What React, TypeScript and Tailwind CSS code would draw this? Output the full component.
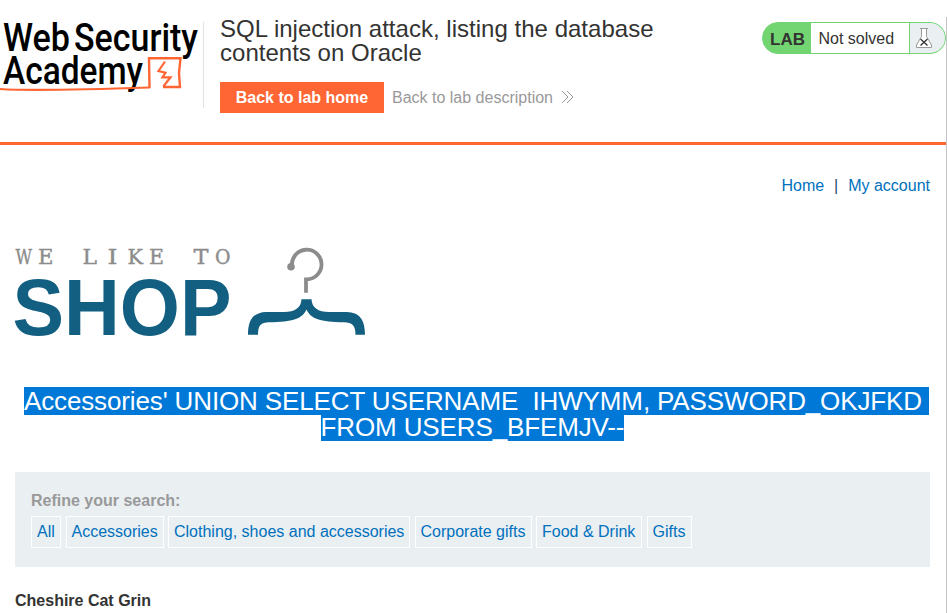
const categories = [
  { name: 'All', width: 'w-[30px]' },
  { name: 'Accessories', width: 'w-[98px]' },
  { name: 'Clothing, shoes and accessories', width: 'w-[242px]' },
  { name: 'Corporate gifts', width: 'w-[117px]' },
  { name: 'Food & Drink', width: 'w-[106px]' },
  { name: 'Gifts', width: 'w-[45px]' },
];

const tagline = [
  { letter: 'W', x: 0.5, width: 16.5 },
  { letter: 'E', x: 23, width: 15.5 },
  { letter: 'L', x: 67.5, width: 14.5 },
  { letter: 'I', x: 92.5, width: 10 },
  { letter: 'K', x: 112.500, width: 15.5 },
  { letter: 'E', x: 134, width: 15 },
  { letter: 'T', x: 178.500, width: 15 },
  { letter: 'O', x: 200, width: 15.5 },
];

function AcademyLogo() {
  return (
    <svg width="203" height="95" viewBox="0 -10 203 95" className="shrink-0" aria-label="Web Security Academy">
      <g fontFamily="Roboto, sans-serif" fontWeight="500" fontSize="38" fill="#000">
        <text x="3" y="28" textLength="67" lengthAdjust="spacingAndGlyphs">Web</text>
        <text x="74" y="28" textLength="124" lengthAdjust="spacingAndGlyphs">Security</text>
        <text x="3" y="60.500" textLength="140" lengthAdjust="spacingAndGlyphs">Academy</text>
      </g>
      <g fill="none" stroke="#ff6633">
        <path d="M0 66C30 68 90 66.500 150 64.500" strokeWidth="2.200" />
        <path d="M149.500 65L149 35.200H180.500L179 50L180 64H163" strokeWidth="2.400" />
        <path d="M165 38.500L158.500 48L165.500 49.700L162.500 54.300H170.500L163.300 63.500" strokeWidth="2.200" />
      </g>
    </svg>
  );
}

function LabStatus() {
  return (
    <div className="mt-[22px] flex h-8 w-[184px] shrink-0 overflow-hidden rounded-full border border-[#72d572] bg-[#72d572]">
      <strong className="w-12 pl-[7px] text-[17px] leading-[33px]">LAB</strong>
      <span className="w-[98px] bg-white pl-[7.5px] text-base leading-[31px]">Not solved</span>
      <span className="ml-px flex-1 bg-[#eaeff2]">
        <svg width="32" height="30" viewBox="0 0 32 30" fill="none" stroke="#999999">
          <path d="M11.500 5.500v8L6.500 22v2.500h15V22l-5-8.500v-8z" fill="#fff" />
          <path d="M10 5.500h8" />
          <path d="M10.500 16l7 6.500M17.500 16l-7 6.500" stroke="#333332" strokeWidth="1.300" />
        </svg>
      </span>
    </div>
  );
}

function ShopLogo() {
  return (
    <svg width="356" height="112" viewBox="-4 0 356 112" className="-ml-1" aria-label="We like to shop">
      <g fill="#8c8c8c" stroke="#8c8c8c" strokeWidth="0.400" fontFamily="DejaVu Serif, serif" fontSize="20.500">
        {tagline.map(({ letter, x, width }) => (
          <text key={x} x={x} y="23" textLength={width} lengthAdjust="spacingAndGlyphs">{letter}</text>
        ))}
      </g>
      <text x="-2.500" y="93.500" fill="#125f82" fontFamily="Liberation Sans, sans-serif" fontWeight="700" fontSize="80" textLength="219" lengthAdjust="spacingAndGlyphs">SHOP</text>
      <path d="M277 25A14.800 14.800 0 1 1 291.800 38.300H291V51.700" fill="none" stroke="#8c8c8c" strokeWidth="3.800" />
      <circle cx="276" cy="25.700" r="3.800" fill="#8c8c8c" />
      <path d="M286.500 58.300H296.500C297 67 303 71 314 71H332C344 71.500 350 78 350 93.700H340.500C340.500 84 337 81.500 329 81.200C305 81 296 78 291.500 68.500C287 78 278 81 254 81.200C246 81.500 243 84 243 93.700H233C233 78 239 71.500 251 71H269C280 71 286 67 286.500 58.300Z" fill="#125f82" />
    </svg>
  );
}

export default function App() {
  return (
    <div className="flex h-[613px] w-[947px] overflow-hidden bg-white font-['Liberation_Sans',Arial,sans-serif] text-base text-[#333332]">
      <div className="w-[946px] shrink-0">
        <header className="flex h-[145px] border-b-[3px] border-[#ff6633]">
          <div className="mt-[13px] flex h-[95px] items-end">
            <AcademyLogo />
            <div className="h-[86px] w-px bg-[#e2e2e2]" />
          </div>
          <div className="ml-4 w-[542px] pt-[17px]">
            <h1 className="text-[24px] leading-6 tracking-[0.02px]">SQL injection attack, listing the database<br />contents on Oracle</h1>
            <div className="mt-[17px] flex items-center">
              <a className="h-[31px] w-[164px] bg-[#ff6633] text-center font-bold leading-[31px] text-white">Back to lab home</a>
              <a className="ml-2 flex items-center leading-[31px] text-[#999999]">
                Back to lab description
                <svg className="mb-px ml-2" width="14" height="14" fill="none" stroke="#999999"><path d="M1 1l6 6-6 6M6 1l6 6-6 6" /></svg>
              </a>
            </div>
          </div>
          <LabStatus />
        </header>
        <main className="pl-[15px] pr-4">
          <nav className="flex justify-end pt-[29px] leading-6 text-[#0071bd]">
            <a>Home</a><span className="w-6 text-center text-[#1f4f70]">|</span><a>My account</a>
          </nav>
          <div className="mt-[43px] h-[112px]"><ShopLogo /></div>
          <h2 className="mt-[34px] flex flex-col items-center whitespace-nowrap text-[26px] leading-7 tracking-[-0.13px] text-white">
            <span className="ml-[8px] h-7 bg-[#0078d7]">Accessories' UNION SELECT USERNAME_IHWYMM, PASSWORD_OKJFKD&nbsp;</span>
            <span className="-mt-0.5 h-7 bg-[#0078d7]">FROM USERS_BFEMJV--</span>
          </h2>
          <section className="mt-[31px] h-[95px] bg-[#eaeff2] px-4 pt-[17px]">
            <p className="h-[27px] font-bold leading-6 text-[#999999]">Refine your search:</p>
            <div className="flex gap-[4.5px]">
              {categories.map(({ name, width }) => (
                <a key={name} className={`${width} h-8 shrink-0 whitespace-nowrap border border-white pl-[5px] leading-[30px] text-[#0071bd]`}>{name}</a>
              ))}
            </div>
          </section>
          <h3 className="mt-[22px] font-bold leading-6">Cheshire Cat Grin</h3>
        </main>
      </div>
      <div className="mt-[17px] w-px bg-[#c4c4c4]" />
    </div>
  );
}
